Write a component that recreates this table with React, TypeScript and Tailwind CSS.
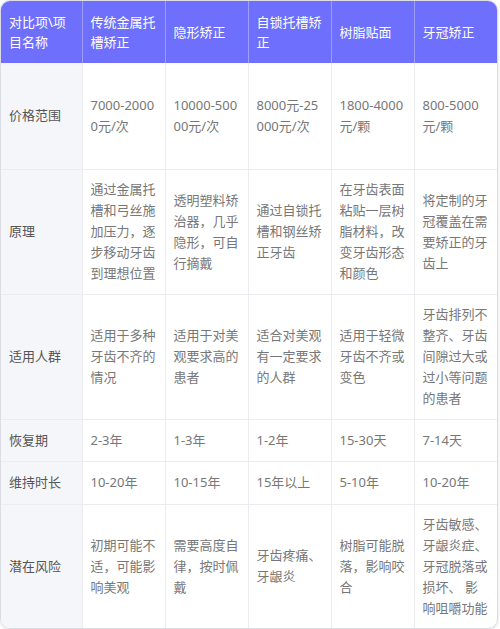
import React from "react";

const headers = ["对比项\\项目名称", "传统金属托槽矫正", "隐形矫正", "自锁托槽矫正", "树脂贴面", "牙冠矫正"];

const rows: { h: string; label: string; cells: string[] }[] = [
  { h: "h-[106px]", label: "价格范围", cells: ["7000-20000元/次", "10000-50000元/次", "8000元-25000元/次", "1800-4000元/颗", "800-5000元/颗"] },
  { h: "h-[125px]", label: "原理", cells: ["通过金属托槽和弓丝施加压力，逐步移动牙齿到理想位置", "透明塑料矫治器，几乎隐形，可自行摘戴", "通过自锁托槽和钢丝矫正牙齿", "在牙齿表面粘贴一层树脂材料，改变牙齿形态和颜色", "将定制的牙冠覆盖在需要矫正的牙齿上"] },
  { h: "h-[125px]", label: "适用人群", cells: ["适用于多种牙齿不齐的情况", "适用于对美观要求高的患者", "适合对美观有一定要求的人群", "适用于轻微牙齿不齐或变色", "牙齿排列不整齐、牙齿间隙过大或过小等问题的患者"] },
  { h: "h-[42px]", label: "恢复期", cells: ["2-3年", "1-3年", "1-2年", "15-30天", "7-14天"] },
  { h: "h-[43px]", label: "维持时长", cells: ["10-20年", "10-15年", "15年以上", "5-10年", "10-20年"] },
  { h: "h-[124px]", label: "潜在风险", cells: ["初期可能不适，可能影响美观", "需要高度自律，按时佩戴", "牙齿疼痛、牙龈炎", "树脂可能脱落，影响咬合", "牙齿敏感、牙龈炎症、牙冠脱落或损坏、 影响咀嚼功能"] },
];

export default function App() {
  return (
    <div className="w-[500px] h-[629px] bg-white" style={{ fontFamily: '"Noto Sans", "Noto Sans CJK SC", sans-serif' }}>
      <div className="w-[498px] rounded-[10px] overflow-hidden border border-[#dcdce4] shadow-[0_1px_3px_rgba(0,0,0,0.12)]">
        <table className="w-full table-fixed border-collapse text-[13px] leading-[21px]">
          <colgroup>
            <col className="w-[81px]" />
            <col className="w-[83px]" />
            <col className="w-[83px]" />
            <col className="w-[83px]" />
            <col className="w-[83px]" />
            <col className="w-[83px]" />
          </colgroup>
          <thead>
            <tr className="h-[62px] bg-[#6e6ffd]">
              {headers.map((t, i) => (
                <th
                  key={i}
                  className={`px-2 text-left align-middle font-normal text-white leading-[20px] break-all ${i > 0 ? "border-l border-[#9c9dfc]" : ""}`}
                >
                  {t}
                </th>
              ))}
            </tr>
          </thead>
          <tbody>
            {rows.map((r, ri) => (
              <tr key={ri} className={`${r.h} ${ri > 0 ? "border-t border-[#ececf0]" : ""}`}>
                <td className="pl-2 pr-1 align-middle bg-[#f5f6fa] text-[#555555]">{r.label}</td>
                {r.cells.map((c, ci) => (
                  <td key={ci} className="px-2 align-middle border-l border-[#ececf0] text-[#777777] break-all">
                    {c}
                  </td>
                ))}
              </tr>
            ))}
          </tbody>
        </table>
      </div>
    </div>
  );
}
